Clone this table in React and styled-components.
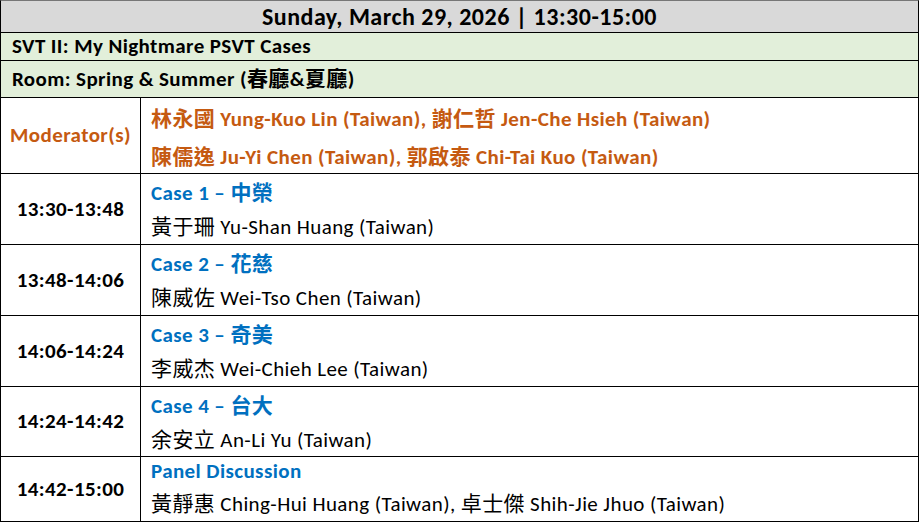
import React from "react";
import styled, { createGlobalStyle } from "styled-components";

const Global = createGlobalStyle`
  html, body { margin: 0; padding: 0; background: #fff; }
  body { font-family: Carlito, Lato, "Noto Sans CJK TC", sans-serif; }
`;

const Table = styled.div`
  width: 919px;
  box-sizing: border-box;
  border: 1px solid #000;
  border-top: 1px solid #777;
  display: grid;
  grid-template-columns: 140px 1fr;
  font-family: Carlito, Lato, "Noto Sans CJK TC", sans-serif;
  letter-spacing: 0.4px;
  color: #000;
`;

const Banner = styled.div`
  grid-column: 1 / -1;
  height: ${(p) => p.$h}px;
  box-sizing: border-box;
  background: ${(p) => p.$bg};
  border-bottom: 1px solid #000;
  display: flex;
  align-items: center;
  justify-content: ${(p) => (p.$center ? "center" : "flex-start")};
  padding: 0 11px;
  font-weight: 700;
  font-size: ${(p) => p.$size}px;
  letter-spacing: ${(p) => p.$ls || 0.4}px;
  line-height: 1;
  white-space: nowrap;
`;

const LabelCell = styled.div`
  height: ${(p) => p.$h}px;
  box-sizing: border-box;
  border-right: 1px solid #000;
  border-bottom: ${(p) => (p.$last ? "none" : "1px solid #000")};
  display: flex;
  align-items: center;
  justify-content: center;
  font-weight: 700;
  font-size: 21px;
  line-height: 1;
  color: ${(p) => p.$color || "#000"};
  white-space: nowrap;
`;

const ContentCell = styled.div`
  height: ${(p) => p.$h}px;
  box-sizing: border-box;
  border-bottom: ${(p) => (p.$last ? "none" : "1px solid #000")};
  display: flex;
  flex-direction: column;
  justify-content: center;
  gap: ${(p) => p.$gap}px;
  padding: ${(p) => p.$top || 0}px 10px ${(p) => p.$bottom || 0}px;
  white-space: nowrap;
`;

const Line = styled.div`
  font-size: 21px;
  line-height: 1;
  font-weight: ${(p) => (p.$bold ? 700 : 400)};
  color: ${(p) => p.$color || "#000"};
`;

const ORANGE = "#c55a11";
const BLUE = "#0070c0";

const sessions = [
  { time: "13:30-13:48", title: "Case 1 – 中榮", who: "黃于珊 Yu-Shan Huang (Taiwan)", h: 71 },
  { time: "13:48-14:06", title: "Case 2 – 花慈", who: "陳威佐 Wei-Tso Chen (Taiwan)", h: 71 },
  { time: "14:06-14:24", title: "Case 3 – 奇美", who: "李威杰 Wei-Chieh Lee (Taiwan)", h: 71 },
  { time: "14:24-14:42", title: "Case 4 – 台大", who: "余安立 An-Li Yu (Taiwan)", h: 70 },
  {
    time: "14:42-15:00",
    title: "Panel Discussion",
    who: "黃靜惠 Ching-Hui Huang (Taiwan), 卓士傑 Shih-Jie Jhuo (Taiwan)",
    h: 64,
  },
];

export default function App() {
  return (
    <>
      <Global />
      <Table>
        <Banner $h={32} $bg="#d9d9d9" $center $size={24} $ls={0.5}>
          Sunday, March 29, 2026 | 13:30-15:00
        </Banner>
        <Banner $h={28} $bg="#e2efda" $size={21}>
          SVT II: My Nightmare PSVT Cases
        </Banner>
        <Banner $h={37} $bg="#e2efda" $size={21}>
          Room: Spring &amp; Summer (春廳&amp;夏廳)
        </Banner>
        <LabelCell $h={76} $color={ORANGE}>Moderator(s)</LabelCell>
        <ContentCell $h={76} $gap={17} $top={6}>
          <Line $bold $color={ORANGE}>林永國 Yung-Kuo Lin (Taiwan), 謝仁哲 Jen-Che Hsieh (Taiwan)</Line>
          <Line $bold $color={ORANGE}>陳儒逸 Ju-Yi Chen (Taiwan), 郭啟泰 Chi-Tai Kuo (Taiwan)</Line>
        </ContentCell>
        {sessions.map((s, i) => {
          const last = i === sessions.length - 1;
          return (
            <React.Fragment key={s.time}>
              <LabelCell $h={s.h} $last={last}>{s.time}</LabelCell>
              <ContentCell
                $h={s.h}
                $last={last}
                $gap={last ? 12 : 13}
                $top={last ? 0 : 3}
                $bottom={last ? 2 : 0}
              >
                <Line $bold $color={BLUE}>{s.title}</Line>
                <Line>{s.who}</Line>
              </ContentCell>
            </React.Fragment>
          );
        })}
      </Table>
    </>
  );
}
